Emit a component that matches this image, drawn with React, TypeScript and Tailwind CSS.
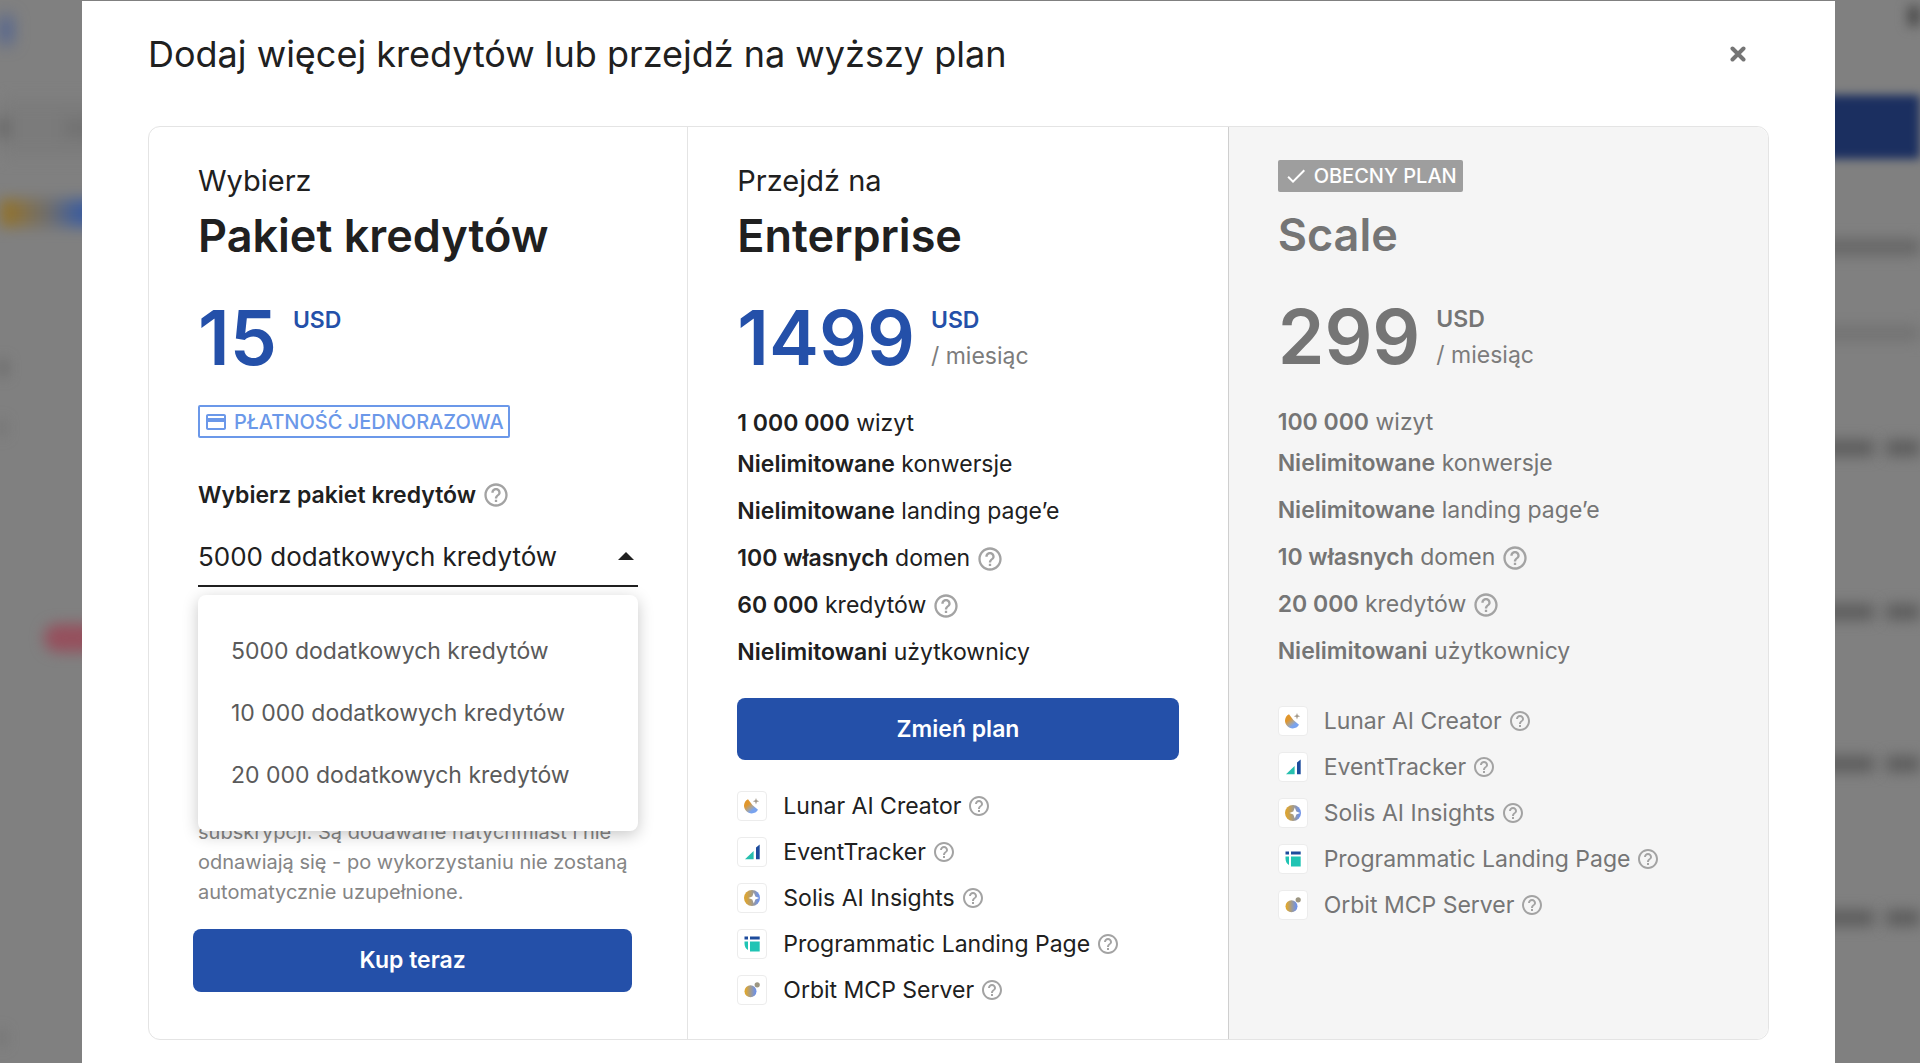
import React from 'react';
import { MdCheck, MdHelpOutline, MdOutlineCreditCard } from 'react-icons/md';

type Feature = { bold: string; text: string; help?: boolean };

const packages = [
  '5000 dodatkowych kredytów',
  '10 000 dodatkowych kredytów',
  '20 000 dodatkowych kredytów',
];

const enterpriseFeatures: Feature[] = [
  { bold: '1 000 000', text: 'wizyt' },
  { bold: 'Nielimitowane', text: 'konwersje' },
  { bold: 'Nielimitowane', text: 'landing page’e' },
  { bold: '100 własnych', text: 'domen', help: true },
  { bold: '60 000', text: 'kredytów', help: true },
  { bold: 'Nielimitowani', text: 'użytkownicy' },
];

const scaleFeatures: Feature[] = [
  { bold: '100 000', text: 'wizyt' },
  { bold: 'Nielimitowane', text: 'konwersje' },
  { bold: 'Nielimitowane', text: 'landing page’e' },
  { bold: '10 własnych', text: 'domen', help: true },
  { bold: '20 000', text: 'kredytów', help: true },
  { bold: 'Nielimitowani', text: 'użytkownicy' },
];

const LunarIcon = () => (
  <svg viewBox="0 0 16 16" className="size-4">
    <defs>
      <linearGradient id="lunar" x1="0.2" y1="0.2" x2="0.75" y2="0.9">
        <stop offset="0.2" stopColor="#e0962c" />
        <stop offset="0.55" stopColor="#a9a49a" />
        <stop offset="0.8" stopColor="#79a3ee" />
      </linearGradient>
    </defs>
    <path d="M4 1.2C1.6 2.4 0 4.8 0 7.6 0 11.9 3.4 15.4 7.8 15.4c2.7 0 5-1.4 6.200-3.600Q8 7.800 4 1.200Z" fill="url(#lunar)" />
    <path d="M12 0l.8 2.3L15.2 3.2l-2.4.9L12 6.500l-.8-2.400-2.400-.9 2.400-.9Z" fill="#a39a8c" />
  </svg>
);

const TrackerIcon = () => (
  <svg viewBox="0 0 16 16" className="size-4">
    <path d="M1 15.200L9.600 7v8.200Z" fill="#26bfae" />
    <path d="M12 3.400L15.700.6v14.600H12Z" fill="#1c4b9c" />
  </svg>
);

const SolisIcon = () => (
  <svg viewBox="0 0 16 16" className="size-4">
    <defs>
      <linearGradient id="solis">
        <stop offset="0.15" stopColor="#d9a437" />
        <stop offset="0.55" stopColor="#a09a90" />
        <stop offset="0.9" stopColor="#6f92e6" />
      </linearGradient>
    </defs>
    <circle cx="8" cy="8" r="8" fill="url(#solis)" />
    <path d="M9.800 2.600l1.500 3.900L15.200 8l-3.900 1.500L9.800 13.400 8.300 9.500 4.400 8l3.900-1.500Z" fill="#fff" />
  </svg>
);

const LandingIcon = () => (
  <svg viewBox="0 0 16 16" className="size-4">
    <path d="M.5.500h3.500v3H.5ZM6 .5h9.700v3H6Z" fill="#1c4b9c" />
    <path d="M.5 5.500h3.500v8.500C1.500 12.500.5 10 .5 7.500ZM6 5.500h9.700v10H6Z" fill="#20c4b4" />
  </svg>
);

const OrbitIcon = () => (
  <svg viewBox="0 0 16 16" className="size-4">
    <defs>
      <linearGradient id="orbit">
        <stop offset="0.1" stopColor="#dfa72f" />
        <stop offset="0.5" stopColor="#a39c8e" />
        <stop offset="0.9" stopColor="#6f92e6" />
      </linearGradient>
    </defs>
    <circle cx="6.500" cy="9.300" r="6" fill="url(#orbit)" />
    <circle cx="13.200" cy="2.800" r="2.600" fill="#9c9682" />
  </svg>
);

const addons = [
  { name: 'Lunar AI Creator', icon: LunarIcon },
  { name: 'EventTracker', icon: TrackerIcon },
  { name: 'Solis AI Insights', icon: SolisIcon },
  { name: 'Programmatic Landing Page', icon: LandingIcon },
  { name: 'Orbit MCP Server', icon: OrbitIcon },
];

const Price: React.FC<{ value: string; monthly?: boolean; color: string }> = ({ value, monthly, color }) => (
  <div className={`mt-[37px] flex gap-4 ${color}`}>
    <span className="text-[75px] leading-[72px] font-semibold">{value}</span>
    <span className="text-[23px] leading-9">
      <span className="block font-semibold">USD</span>
      {monthly && <span className="block text-[#7c7c7c]">/ miesiąc</span>}
    </span>
  </div>
);

const FeatureList: React.FC<{ items: Feature[] }> = ({ items }) => (
  <ul className="mt-[29px] text-[23px]">
    {items.map((item, i) => (
      <li
        key={item.bold + item.text}
        className={`flex items-center ${i < 2 ? 'leading-[41px]' : 'leading-[47px]'} ${i === 2 ? 'mt-[3px]' : ''}`}
      >
        <span>
          <strong className="font-semibold">{item.bold}</strong> {item.text}
        </span>
        {item.help && <MdHelpOutline className="ml-1.5 size-7 text-[#a3a3a3]" />}
      </li>
    ))}
  </ul>
);

const AddonList: React.FC = () => (
  <ul className="mt-[23px] text-[23px] leading-[46px]">
    {addons.map(({ name, icon: Icon }) => (
      <li key={name} className="flex items-center">
        <span className="mr-4 flex size-[30px] items-center justify-center rounded-sm border border-[#ececec] bg-white">
          <Icon />
        </span>
        {name}
        <MdHelpOutline className="ml-1.5 size-6 text-[#a3a3a3]" />
      </li>
    ))}
  </ul>
);

// Blurred page that stays visible on both sides of the dialog
const Backdrop: React.FC = () => (
  <div className="absolute inset-0 flex justify-between overflow-hidden" aria-hidden="true">
    <div className="flex w-[100px] flex-col">
      <div className="mt-4 h-7 w-3 bg-[#4b5f92] blur-[8px]" />
      <div className="mt-14 flex h-14 items-center justify-between bg-[#7b7b7b] blur-[8px]">
        <div className="h-4 w-1.5 bg-[#444]" />
        <div className="h-4 w-9 bg-[#707070]" />
      </div>
      <div className="mt-[43px] h-7 bg-linear-to-r from-[#8f7230] from-10% via-[#6d6d6f] via-50% to-[#3d5c9c] to-80% blur-[7px]" />
      <div className="mt-[133px] h-4 w-1.5 bg-[#5c5c5c] blur-[7px]" />
      <div className="mt-11 h-4 w-1 bg-[#666] blur-[7px]" />
      <div className="mt-[188px] ml-11 h-7 rounded-full bg-[#95505d] blur-[7px]" />
      <div className="mt-[378px] h-4 w-1 bg-[#666] blur-[7px]" />
    </div>
    <div className="flex w-[100px] flex-col">
      <div className="mt-1.5 h-5 w-3 self-end bg-[#4a4a4a] blur-[6px]" />
      <div className="mt-[69px] h-16 bg-[#1b2f60] blur-[5px]" />
      <div className="mt-20 h-4 bg-[#666] blur-[7px]" />
      <div className="mt-[70px] h-4 bg-[#737373] blur-[7px]" />
      {['mt-[99px]', 'mt-[148px]', 'mt-[136px]', 'mt-[138px]'].map((gap) => (
        <div key={gap} className={`flex h-4 gap-3 ${gap}`}>
          <div className="h-4 w-[54px] bg-[#5c5c5c] blur-[7px]" />
          <div className="h-4 flex-1 bg-[#5c5c5c] blur-[7px]" />
        </div>
      ))}
    </div>
  </div>
);

const App: React.FC = () => {
  return (
    <div className="relative min-h-screen overflow-hidden bg-[#808080] py-px font-['Inter',sans-serif] text-[#202020]">
      <Backdrop />
      <div role="dialog" aria-labelledby="dialog-title" className="relative mr-[85px] ml-[82px] bg-white px-[66px] pt-[31px] pb-[23px]">
        <header className="flex items-center justify-between pr-[23px]">
          <h1 id="dialog-title" className="text-4xl leading-11">
            Dodaj więcej kredytów lub przejdź na wyższy plan
          </h1>
          <button type="button" aria-label="Zamknij" className="text-[#757575]">
            <svg viewBox="0 0 16 16" className="size-4" stroke="currentColor" strokeWidth="4" strokeLinecap="round">
              <path d="M2.500 2.500l11 11M13.500 2.500l-11 11" />
            </svg>
          </button>
        </header>

        <div className="mt-[50px] grid grid-cols-[539fr_541fr_541fr] rounded-xl border border-[#e4e4e4]">
          {/* Credit pack */}
          <section className="pt-9">
            <div className="px-[49px]">
              <p className="text-[29px] leading-9">Wybierz</p>
              <h2 className="mt-2 text-[45px] leading-[58px] font-semibold">Pakiet kredytów</h2>
              <Price value="15" color="text-[#2450a9]" />
              <div className="mt-[31px] flex h-[33px] w-fit items-center gap-1.5 rounded-xs border-2 border-[#6b98e9] px-1 text-xl font-medium text-[#6b98e9]">
                <MdOutlineCreditCard className="size-6" />
                PŁATNOŚĆ JEDNORAZOWA
              </div>
              <div className="mt-[39px] flex items-center gap-1.5">
                <label htmlFor="package" className="text-[23px] leading-9 font-semibold">
                  Wybierz pakiet kredytów
                </label>
                <MdHelpOutline className="size-7 text-[#a3a3a3]" />
              </div>
              <div className="relative mt-3.5">
                <select
                  id="package"
                  className="block h-[60px] w-full appearance-none border-b-2 border-[#202020] bg-transparent text-[26px]"
                >
                  {packages.map((name) => (
                    <option key={name}>{name}</option>
                  ))}
                </select>
                <svg viewBox="0 0 16 8" className="pointer-events-none absolute top-[25px] right-1 h-2 w-4">
                  <path d="M0 8L8 0l8 8Z" fill="#202020" />
                </svg>
                <ul
                  role="listbox"
                  aria-label="Pakiety"
                  className="absolute top-full z-10 mt-2 w-full rounded-lg bg-white py-[25px] shadow-[0_4px_16px_rgba(0,0,0,0.22)]"
                >
                  {packages.map((name) => (
                    <li key={name} role="option" className="px-[33px] text-[23px] leading-[62px] text-[#5a5a5a]">
                      {name}
                    </li>
                  ))}
                </ul>
              </div>
              <p className="mt-[230px] text-xl leading-[30px] text-[#858585]">
                subskrypcji. Są dodawane natychmiast i nie odnawiają się - po wykorzystaniu nie zostaną automatycznie
                uzupełnione.
              </p>
            </div>
            <div className="mt-[22px] pr-[55px] pl-11">
              <button type="button" className="h-[63px] w-full rounded-lg bg-[#2450a9] text-[23px] font-semibold text-white">
                Kup teraz
              </button>
            </div>
          </section>

          {/* Enterprise */}
          <section className="border-l border-[#e4e4e4] px-[49px] pt-9 pb-[26px]">
            <p className="text-[29px] leading-9">Przejdź na</p>
            <h2 className="mt-2 text-[45px] leading-[58px] font-semibold">Enterprise</h2>
            <Price value="1499" monthly color="text-[#2450a9]" />
            <FeatureList items={enterpriseFeatures} />
            <button type="button" className="mt-[22px] h-[62px] w-full rounded-lg bg-[#2450a9] text-[23px] font-semibold text-white">
              Zmień plan
            </button>
            <AddonList />
          </section>

          {/* Current plan */}
          <section className="rounded-r-xl border-l border-[#cfcfcf] bg-[#f5f5f5] px-[49px] pt-[33px] text-[#757575]">
            <div className="flex h-8 w-fit items-center gap-1.5 rounded-xs bg-[#9e9e9e] px-1.5 text-xl font-medium text-white">
              <MdCheck className="size-6" />
              OBECNY PLAN
            </div>
            <h2 className="mt-3.5 text-[45px] leading-[58px] font-semibold">Scale</h2>
            <Price value="299" monthly color="text-[#757575]" />
            <FeatureList items={scaleFeatures} />
            <AddonList />
          </section>
        </div>
      </div>
    </div>
  );
};

export default App;
